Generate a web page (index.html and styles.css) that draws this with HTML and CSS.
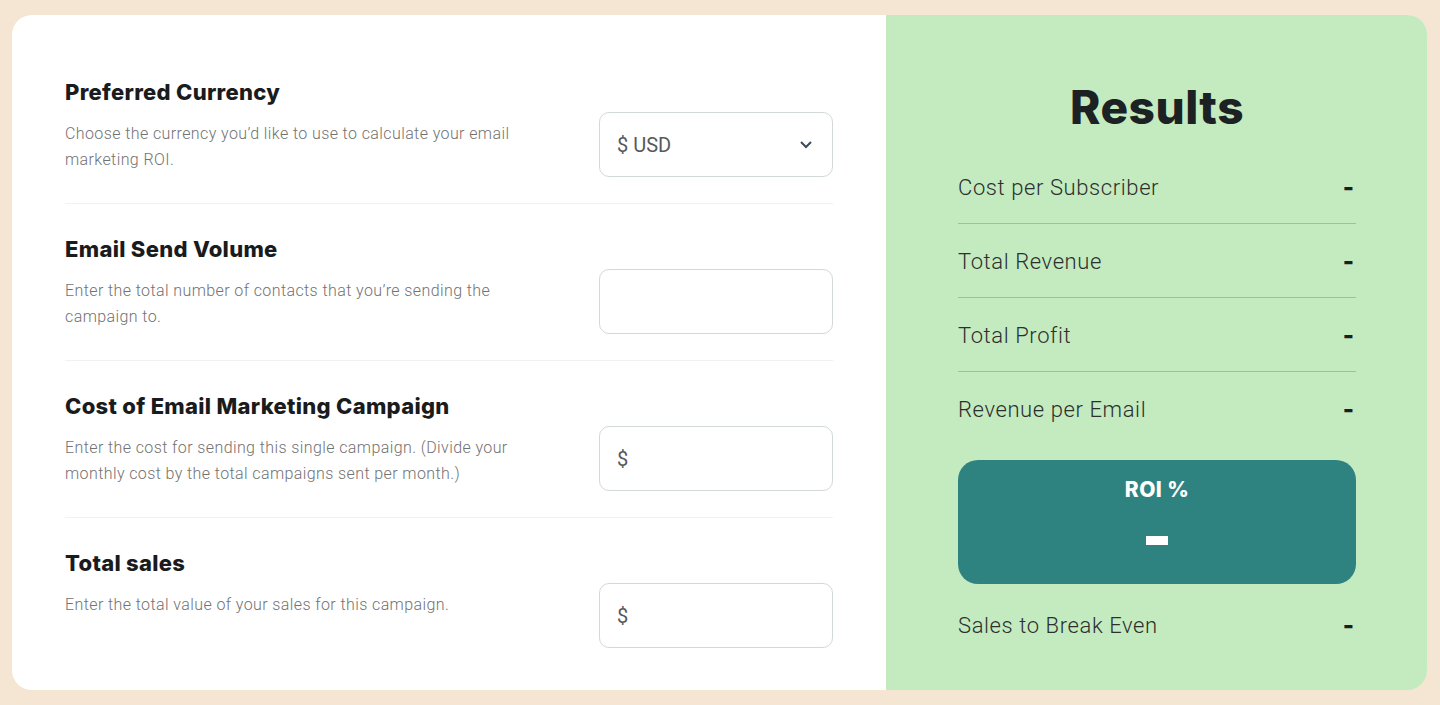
FILE: index.html
```html
<!DOCTYPE html>
<html lang="en">
<head>
<meta charset="utf-8">
<title>Email Marketing ROI Calculator</title>
<link rel="stylesheet" href="styles.css">
</head>
<body>
<main class="card">
  <section class="inputs">
    <div class="field">
      <div class="field-text">
        <h2 class="field-title">Preferred Currency</h2>
        <p class="field-desc">Choose the currency you’d like to use to calculate your email marketing ROI.</p>
      </div>
      <div class="control select">
        <span class="control-value">$ USD</span>
        <svg class="chevron" width="14" height="9" viewBox="0 0 14 9"><path d="M2 2l5 5 5-5" fill="none" stroke="#3d4a57" stroke-width="2"/></svg>
      </div>
    </div>
    <div class="field">
      <div class="field-text">
        <h2 class="field-title">Email Send Volume</h2>
        <p class="field-desc">Enter the total number of contacts that you’re sending the campaign to.</p>
      </div>
      <div class="control"></div>
    </div>
    <div class="field">
      <div class="field-text">
        <h2 class="field-title">Cost of Email Marketing Campaign</h2>
        <p class="field-desc">Enter the cost for sending this single campaign. (Divide your monthly cost by the total campaigns sent per month.)</p>
      </div>
      <div class="control"><span class="control-value">$</span></div>
    </div>
    <div class="field last">
      <div class="field-text">
        <h2 class="field-title">Total sales</h2>
        <p class="field-desc">Enter the total value of your sales for this campaign.</p>
      </div>
      <div class="control"><span class="control-value">$</span></div>
    </div>
  </section>
  <section class="results">
    <h1 class="results-title">Results</h1>
    <div class="result-row"><span>Cost per Subscriber</span><span class="dash">-</span></div>
    <div class="result-row"><span>Total Revenue</span><span class="dash">-</span></div>
    <div class="result-row"><span>Total Profit</span><span class="dash">-</span></div>
    <div class="result-row plain"><span>Revenue per Email</span><span class="dash">-</span></div>
    <div class="roi">
      <div class="roi-label">ROI %</div>
      <div class="roi-value"></div>
    </div>
    <div class="result-row plain last"><span>Sales to Break Even</span><span class="dash">-</span></div>
  </section>
</main>
</body>
</html>
```

FILE: styles.css
```css
* { box-sizing: border-box; }
html, body { margin: 0; padding: 0; }
body {
  background: #f5e6d3;
  padding: 15px 13px 15px 12px;
  font-family: Roboto, "Liberation Sans", sans-serif;
  height: 705px;
  overflow: hidden;
}
.card {
  display: flex;
  height: 675px;
  border-radius: 20px;
  overflow: hidden;
}
.inputs {
  width: 874px;
  background: #ffffff;
  padding: 0 53px;
  padding-top: 32px;
}
.field {
  display: flex;
  justify-content: space-between;
  align-items: flex-start;
  height: 157px;
  padding-top: 31px;
  border-bottom: 1px solid #f1f1ef;
}
.field.last { border-bottom: none; }
.field-text { width: 480px; }
.field-title {
  margin: 0;
  font-family: Inter, "Liberation Sans", sans-serif;
  font-weight: 800;
  font-size: 22px;
  line-height: 29px;
  color: #1a1b1c;
  letter-spacing: 0.3px;
}
.field-desc {
  margin: 14px 0 0;
  font-weight: 300;
  font-size: 16px;
  line-height: 26px;
  color: #727272;
  letter-spacing: 0.4px;
}
.control {
  width: 234px;
  height: 65px;
  margin-top: 34px;
  border: 1px solid #d3d8d8;
  border-radius: 10px;
  display: flex;
  align-items: center;
  justify-content: space-between;
  padding: 0 18px 0 17px;
}
.control-value {
  font-size: 20px;
  color: #555a5e;
  font-weight: 400;
}
.chevron { margin-right: 1px; }
.results {
  flex: 1;
  background: #c4ebc0;
  padding: 60px 71px 0 72px;
}
.results-title {
  margin: 0;
  text-align: center;
  font-family: Inter, "Liberation Sans", sans-serif;
  font-weight: 800;
  font-size: 46px;
  line-height: 64px;
  color: #1c2224;
  letter-spacing: 0.5px;
  height: 75px;
}
.result-row {
  display: flex;
  justify-content: space-between;
  align-items: center;
  height: 74px;
  padding-top: 2px;
  border-bottom: 1px solid #aab7a8;
  font-weight: 300;
  font-size: 22px;
  letter-spacing: 0.6px;
  color: #2c2f2e;
}
.result-row.plain { border-bottom: none; height: 73px; }
.result-row.last { padding-top: 4px; }
.dash {
  font-family: Inter, "Liberation Sans", sans-serif;
  font-weight: 800;
  font-size: 24px;
  letter-spacing: 0;
  color: #1b1f21;
  margin-right: 2px;
}
.roi {
  background: #2e8380;
  border-radius: 20px;
  height: 124px;
  margin: 15px 0 3px;
  display: flex;
  flex-direction: column;
  align-items: center;
  padding-top: 17px;
}
.roi-label {
  font-family: Inter, "Liberation Sans", sans-serif;
  font-weight: 800;
  font-size: 21px;
  line-height: 26px;
  color: #ffffff;
  letter-spacing: 0.4px;
}
.roi-value {
  width: 22px;
  height: 9px;
  background: #ffffff;
  margin-top: 33px;
}
```
